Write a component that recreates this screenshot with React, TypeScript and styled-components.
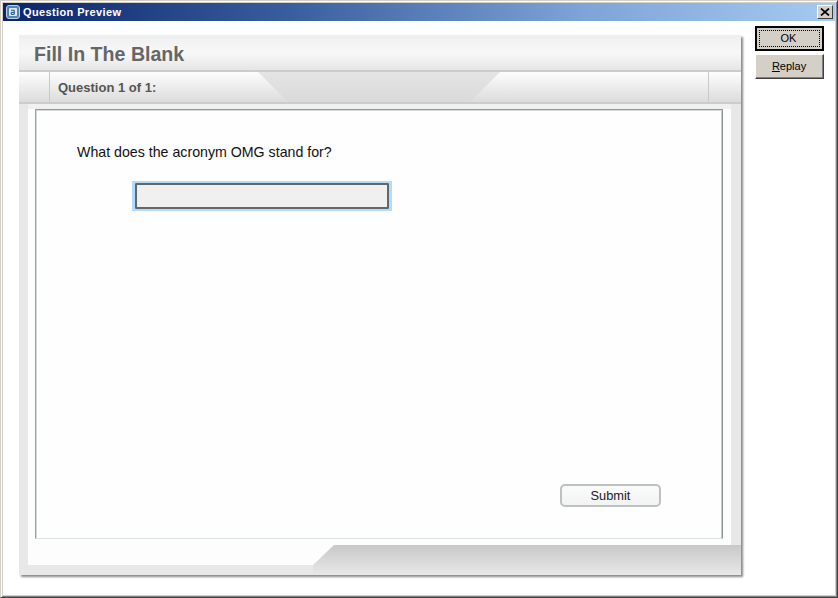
import React from 'react'
import styled, { createGlobalStyle } from 'styled-components'

const GlobalStyle = createGlobalStyle`
    html, body {
        margin: 0;
        padding: 0;
        background: #ffffff;
    }
    * {
        box-sizing: border-box;
    }
`

const Window = styled.div`
    width: 838px;
    height: 598px;
    display: flex;
    flex-direction: column;
    background: #ffffff;
    font-family: 'Liberation Sans', Arial, sans-serif;
    border-style: solid;
    border-width: 1px;
    border-color: #d4d0c8 #404040 #404040 #d4d0c8;
    box-shadow: inset 1px 1px 0 #ffffff, inset -1px -1px 0 #808080, inset 2px 2px 0 #d4d0c8, inset -2px -2px 0 #d4d0c8;
    padding: 2px;
`

const TitleBar = styled.div`
    height: 18px;
    flex: none;
    display: flex;
    align-items: center;
    padding: 0 2px 0 3px;
    background: linear-gradient(to right, #0a246a 0%, #3a5f9e 35%, #7ea4d8 70%, #a6caf0 100%);
`

const TitleIcon = styled.svg`
    width: 14px;
    height: 14px;
    flex: none;
`

const TitleText = styled.span`
    margin-left: 3px;
    font-size: 11px;
    font-weight: 700;
    letter-spacing: 0.38px;
    color: #ffffff;
`

const CloseButton = styled.div`
    margin-left: auto;
    width: 16px;
    height: 14px;
    display: flex;
    align-items: center;
    justify-content: center;
    background: #d4d0c8;
    border-style: solid;
    border-width: 1px;
    border-color: #ffffff #404040 #404040 #ffffff;
`

const Content = styled.div`
    flex: 1;
    display: flex;
    align-items: flex-start;
    padding: 5px 0 0 16px;
`

const Panel = styled.div`
    width: 722px;
    height: 540px;
    margin-top: 9px;
    display: flex;
    flex-direction: column;
    background: #e8e8e8;
    box-shadow: 2px 2px 2px #8a8a8a;
`

const Header = styled.div`
    height: 37px;
    flex: none;
    padding: 7px 0 0 15px;
    background: linear-gradient(to bottom, #efefef 0%, #f8f8f8 50%, #e6e6e6 100%);
    border-bottom: 2px solid #cccccc;
`

const Heading = styled.h1`
    margin: 0;
    font-size: 19.6px;
    line-height: 24px;
    font-weight: 700;
    color: #666666;
`

const SubBar = styled.div`
    position: relative;
    height: 32px;
    flex: none;
    display: flex;
    background: linear-gradient(to bottom, #fdfdfd 0%, #dcdcdc 100%);
    border-bottom: 2px solid #cccccc;
`

const Notch = styled.div`
    position: absolute;
    left: 239px;
    top: 0;
    width: 242px;
    height: 30px;
    background: linear-gradient(to bottom, #e4e4e4 0%, #dadada 100%);
    clip-path: polygon(0 0, 100% 0, 212px 100%, 30px 100%);
`

const SubCell = styled.div<{ $width: string; $divider?: boolean }>`
    width: ${props => props.$width};
    flex: none;
    border-right: ${props => (props.$divider ? '1px solid #c8c8c8' : 'none')};
`

const QuestionCount = styled.div`
    position: relative;
    flex: 1;
    padding-left: 8px;
    font-size: 13px;
    line-height: 31px;
    font-weight: 700;
    color: #555555;
    border-right: 1px solid #c8c8c8;
`

const Body = styled.div`
    flex: 1;
    display: flex;
    flex-direction: column;
    margin: 0 10px 0 9px;
    padding: 5px 8px 6px 7px;
    background: linear-gradient(to bottom, #f0f0f0 0, #f0f0f0 5px, #fdfdfd 5px);
`

const Frame = styled.div`
    position: relative;
    flex: 1;
    display: flex;
    flex-direction: column;
    background: #fefefe;
    border-style: solid;
    border-width: 1px;
    border-color: #8f9999 #8c9494 #dde2e2 #98a2a2;
    box-shadow: inset 1px 1px 0 #d4dada, inset -1px 0 0 #c4caca;
    padding: 33px 0 0 41px;
`

const Prompt = styled.p`
    margin: 0;
    font-size: 14.2px;
    line-height: 18px;
    color: #111111;
`

const InputGlow = styled.div`
    width: 260px;
    height: 30px;
    margin: 20px 0 0 55px;
    border-style: solid;
    border-width: 2px 3px;
    border-color: #b0dcff;
`

const AnswerInput = styled.input`
    display: block;
    width: 100%;
    height: 100%;
    padding: 0 4px;
    background: #f0f0f0;
    border: 2px solid #666666;
    border-radius: 1px;
    outline: none;
`

const SubmitButton = styled.button`
    position: absolute;
    right: 61px;
    bottom: 31px;
    width: 101px;
    height: 23px;
    padding: 0;
    font-family: 'Liberation Sans', Arial, sans-serif;
    font-size: 12.8px;
    color: #1a1a1a;
    background: linear-gradient(to bottom, #fbfbfb 0%, #f3f3f3 100%);
    border: 2px solid #bcc2c2;
    border-radius: 5px;
`

const Footer = styled.div`
    height: 30px;
    flex: none;
    display: flex;
    padding-left: 9px;
`

const FooterBlank = styled.div`
    width: 285px;
    height: 20px;
    background: #fdfdfd;
`

const FooterWedge = styled.div`
    position: relative;
    flex: 1;
    background: linear-gradient(to bottom, #fdfdfd 20px, transparent 20px);
    &::after {
        content: '';
        position: absolute;
        inset: 0;
        background: linear-gradient(to bottom, #c8c8c8 0%, #e8e8e8 100%);
        clip-path: polygon(21px 0, 100% 0, 100% 100%, 0 100%, 0 20px);
    }
`

const SideColumn = styled.div`
    display: flex;
    flex-direction: column;
    gap: 3px;
    margin-left: 14px;
`

const DialogButton = styled.div<{ $focused?: boolean }>`
    width: 69px;
    height: 25px;
    display: flex;
    align-items: center;
    justify-content: center;
    font-size: 11px;
    color: #000000;
    background: #d4d0c8;
    border-style: solid;
    border-width: ${props => (props.$focused ? '2px' : '1px')};
    border-color: ${props => (props.$focused ? '#000000' : '#ffffff #404040 #404040 #ffffff')};
    box-shadow: ${props => (props.$focused ? 'none' : 'inset -1px -1px 0 #808080')};
`

const FocusRing = styled.span`
    width: 61px;
    height: 17px;
    display: flex;
    align-items: center;
    justify-content: center;
    padding: 0 2px 1px 0;
    border: 1px dotted #000000;
`

const ButtonLabel = styled.span`
    margin: -2px 0 0 -1px;
`

const Mnemonic = styled.span`
    text-decoration: underline;
`

export default function App() {
    return (
        <>
            <GlobalStyle />
            <Window>
                <TitleBar>
                    <TitleIcon viewBox="0 0 14 14">
                        <rect x="0.5" y="0.5" width="13" height="13" rx="2.5" fill="#4f86b8" stroke="#c4d0d8" />
                        <rect x="3" y="3" width="8" height="8" rx="1" fill="#dce9f4" />
                        <path d="M5 5.2h3.2v4.2H5.2V7.4h3" fill="none" stroke="#1e4f80" strokeWidth="1" />
                    </TitleIcon>
                    <TitleText>Question Preview</TitleText>
                    <CloseButton>
                        <svg width="10" height="8" viewBox="0 0 10 8">
                            <path d="M1 0.5L9 7.5M9 0.5L1 7.5" stroke="#000000" strokeWidth="1.7" />
                        </svg>
                    </CloseButton>
                </TitleBar>
                <Content>
                    <Panel>
                        <Header>
                            <Heading>Fill In The Blank</Heading>
                        </Header>
                        <SubBar>
                            <Notch />
                            <SubCell $width="31px" $divider />
                            <QuestionCount>Question 1 of 1:</QuestionCount>
                            <SubCell $width="32px" />
                        </SubBar>
                        <Body>
                            <Frame>
                                <Prompt>What does the acronym OMG stand for?</Prompt>
                                <InputGlow>
                                    <AnswerInput type="text" />
                                </InputGlow>
                                <SubmitButton>Submit</SubmitButton>
                            </Frame>
                        </Body>
                        <Footer>
                            <FooterBlank />
                            <FooterWedge />
                        </Footer>
                    </Panel>
                    <SideColumn>
                        <DialogButton $focused>
                            <FocusRing>OK</FocusRing>
                        </DialogButton>
                        <DialogButton>
                            <ButtonLabel>
                                <Mnemonic>R</Mnemonic>eplay
                            </ButtonLabel>
                        </DialogButton>
                    </SideColumn>
                </Content>
            </Window>
        </>
    )
}
